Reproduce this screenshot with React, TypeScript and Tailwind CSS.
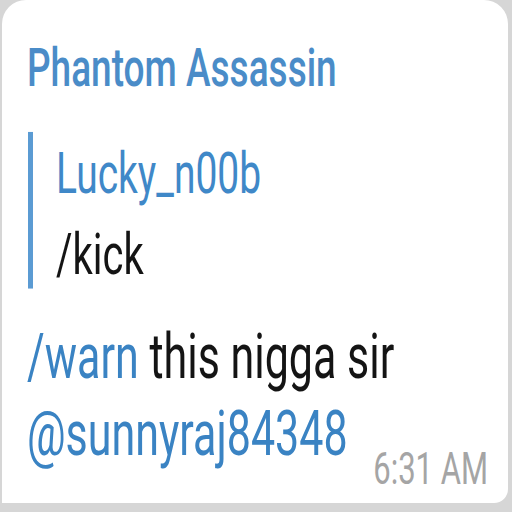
export default function App() {
  return (
    <div className="w-[512px] h-[512px] bg-[#d6d6d6] overflow-hidden" style={{ fontFamily: "Roboto, 'Noto Sans', sans-serif" }}>
      <div className="ml-[2px] w-[506px] h-[503px] bg-white rounded-tl-[24px] rounded-tr-[24px] rounded-br-[14px] overflow-hidden">
        <div className="origin-top-left scale-y-[1.45] pl-[25px] pr-[20px] pt-[25px]">
          <div className="text-[37px] leading-[44px] font-medium text-[#4a8cc8]">Phantom Assassin</div>
          <div className="mt-[22px] ml-[1px] border-l-[5px] border-[#5b9bd3] pl-[23px] pt-[5px]">
            <div className="text-[39px] leading-[48px] text-[#3f88c8]">Lucky_n00b</div>
            <div className="mt-[9px] text-[40px] leading-[46px] text-[#141414]">/kick</div>
          </div>
          <div className="mt-[21px] text-[43px] leading-[53px] text-[#141414]">
            <span className="text-[#3a83c3]">/warn</span> this nigga sir
          </div>
          <div className="flex items-baseline justify-between text-[43px] leading-[53px]">
            <span className="text-[#3a83c3]">@sunnyraj84348</span>
            <span className="text-[31px] text-[#a5a5a5] relative top-[20px]">6:31 AM</span>
          </div>
        </div>
      </div>
    </div>
  );
}
